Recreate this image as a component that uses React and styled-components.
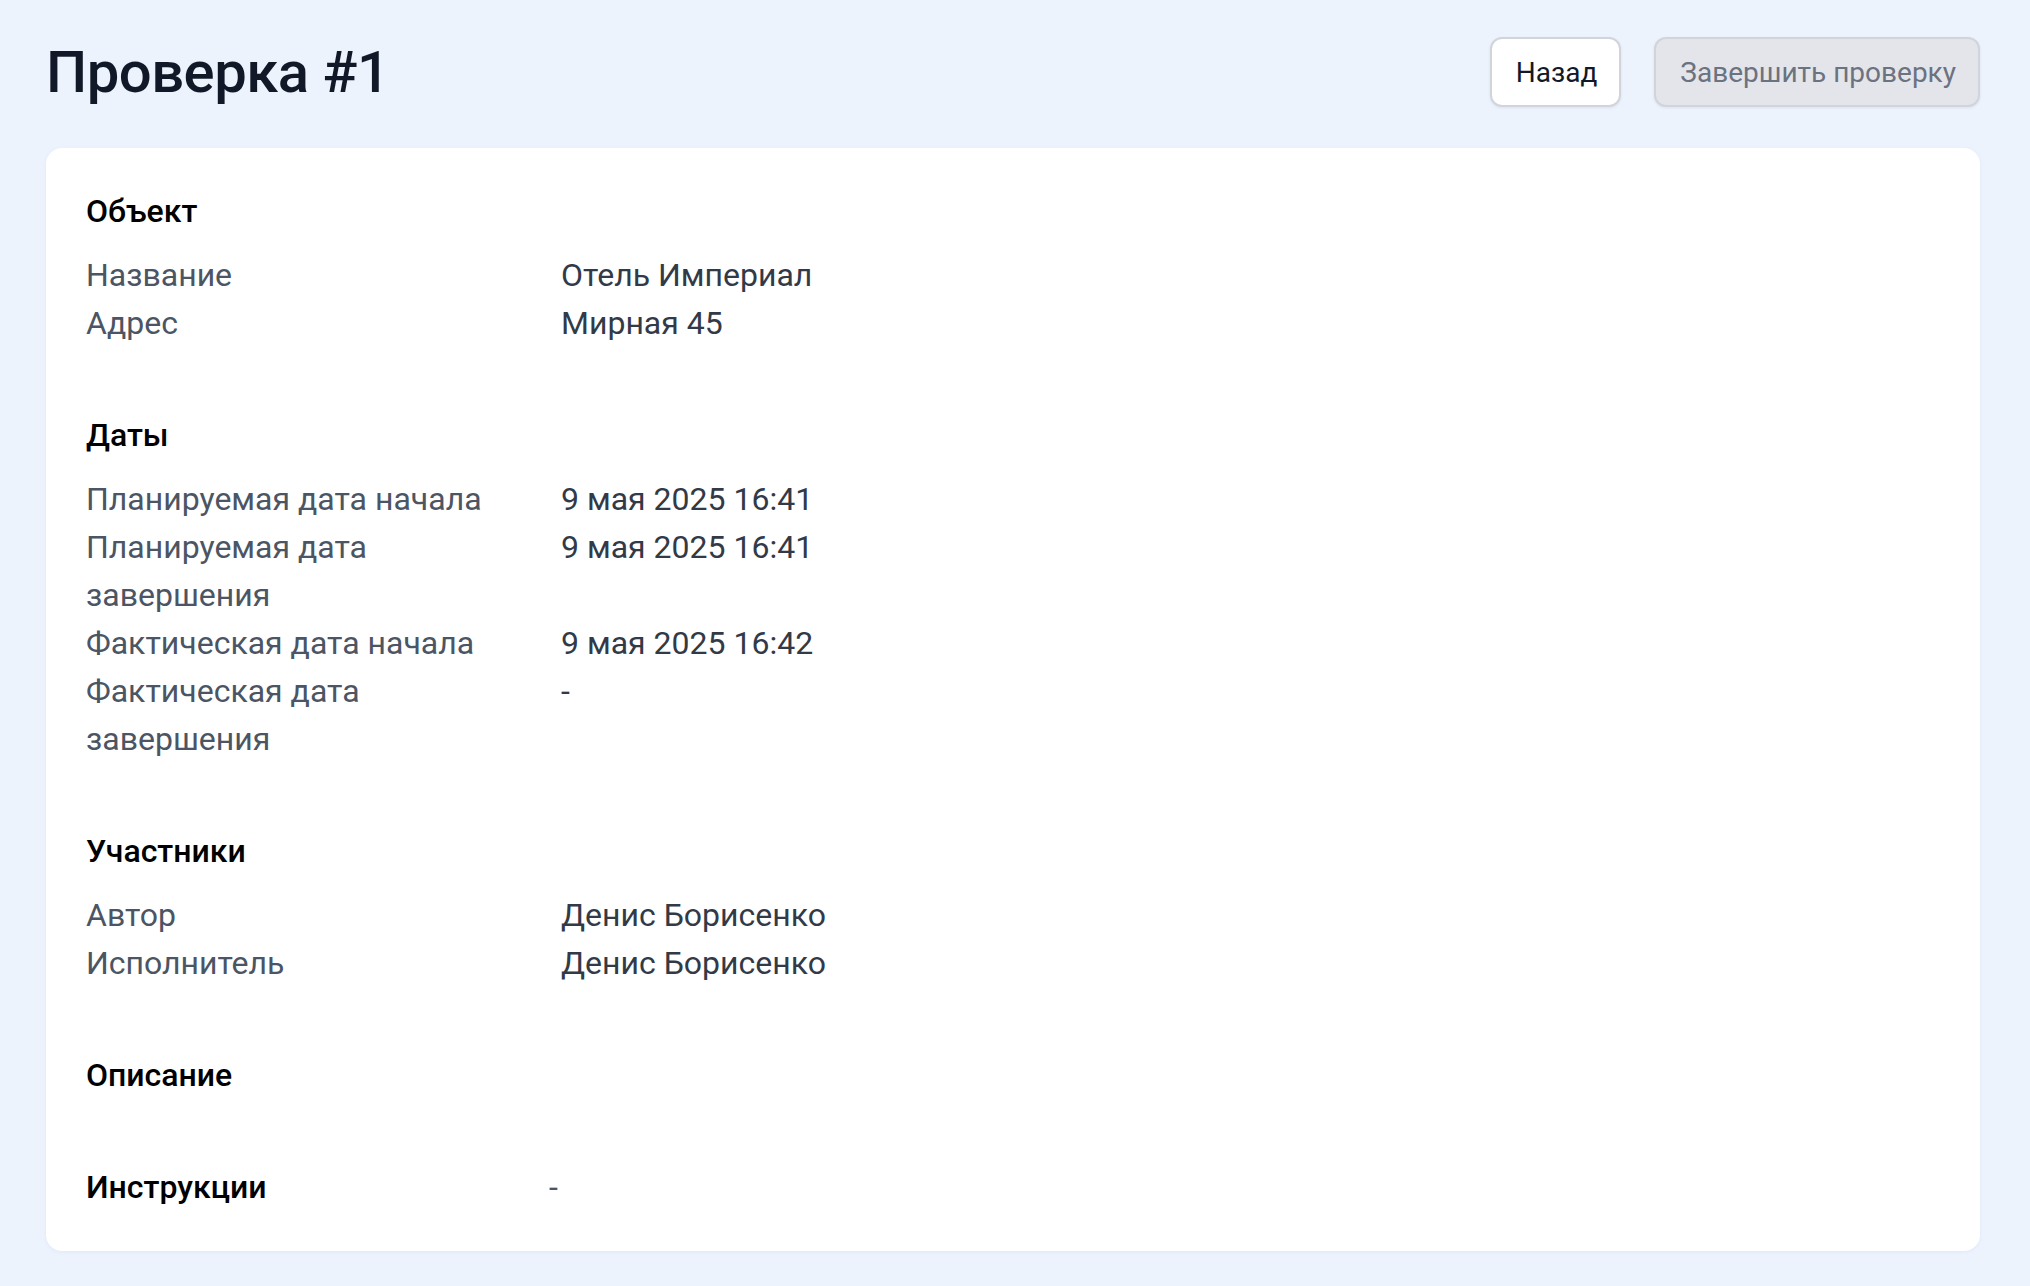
import React from 'react';
import styled, { createGlobalStyle } from 'styled-components';

const GlobalStyle = createGlobalStyle`
  html, body {
    margin: 0;
    padding: 0;
    background: #edf3fd;
  }

  body {
    font-family: Roboto, 'Noto Sans', 'Liberation Sans', sans-serif;
    -webkit-font-smoothing: antialiased;
  }
`;

const Page = styled.div`
  min-height: 1286px;
  box-sizing: border-box;
  padding: 37px 50px 40px 46px;
`;

const Header = styled.header`
  display: flex;
  align-items: center;
  justify-content: space-between;
  height: 70px;
  margin-bottom: 41px;
`;

const Title = styled.h1`
  margin: 0;
  font-size: 58px;
  font-weight: 500;
  color: #111827;
  letter-spacing: -0.5px;
`;

const Actions = styled.div`
  display: flex;
  gap: 33px;
`;

const Button = styled.button`
  height: 70px;
  padding: 0 22px 0 24px;
  border-radius: 12px;
  border: 2px solid #d1d5db;
  font-family: inherit;
  font-size: 28px;
  box-shadow: 0 1px 3px rgba(15, 23, 42, 0.08);
  background: ${(p) => (p.disabled ? '#e3e5ea' : '#ffffff')};
  color: ${(p) => (p.disabled ? '#6b7280' : '#111827')};
  cursor: ${(p) => (p.disabled ? 'default' : 'pointer')};
`;

const Card = styled.section`
  background: #fff;
  border-radius: 16px;
  padding: 39px 40px 40px;
  box-shadow: 0 1px 4px rgba(30, 64, 175, 0.06);
  display: flex;
  flex-direction: column;
  gap: 64px;
`;

const Heading = styled.h3`
  margin: 0;
  font-size: 32px;
  line-height: 48px;
  font-weight: 500;
  color: #000;
`;

const Rows = styled.dl`
  margin: 16px 0 0;
  display: grid;
  grid-template-columns: 440px 1fr;
  column-gap: 35px;
  font-size: 32px;
  line-height: 48px;
`;

const Label = styled.dt`
  color: #4b5563;
`;

const Value = styled.dd`
  margin: 0;
  color: #323a48;
`;

const InlineSection = styled.div`
  display: flex;
  align-items: center;

  ${Heading} {
    width: 463px;
  }
`;

const Dash = styled.span`
  font-size: 32px;
  line-height: 48px;
  color: #4b5563;
`;

const sections = [
  {
    title: 'Объект',
    rows: [
      ['Название', 'Отель Империал'],
      ['Адрес', 'Мирная 45'],
    ],
  },
  {
    title: 'Даты',
    rows: [
      ['Планируемая дата начала', '9 мая 2025 16:41'],
      ['Планируемая дата завершения', '9 мая 2025 16:41'],
      ['Фактическая дата начала', '9 мая 2025 16:42'],
      ['Фактическая дата завершения', '-'],
    ],
  },
  {
    title: 'Участники',
    rows: [
      ['Автор', 'Денис Борисенко'],
      ['Исполнитель', 'Денис Борисенко'],
    ],
  },
  { title: 'Описание', rows: [] },
];

const App = () => (
  <Page>
    <GlobalStyle />
    <Header>
      <Title>Проверка #1</Title>
      <Actions>
        <Button>Назад</Button>
        <Button disabled>Завершить проверку</Button>
      </Actions>
    </Header>
    <Card>
      {sections.map((s) => (
        <div key={s.title}>
          <Heading>{s.title}</Heading>
          {s.rows.length > 0 && (
            <Rows>
              {s.rows.map(([label, value]) => (
                <React.Fragment key={label}>
                  <Label>{label}</Label>
                  <Value>{value}</Value>
                </React.Fragment>
              ))}
            </Rows>
          )}
        </div>
      ))}
      <InlineSection>
        <Heading>Инструкции</Heading>
        <Dash>-</Dash>
      </InlineSection>
    </Card>
  </Page>
);

export default App;
